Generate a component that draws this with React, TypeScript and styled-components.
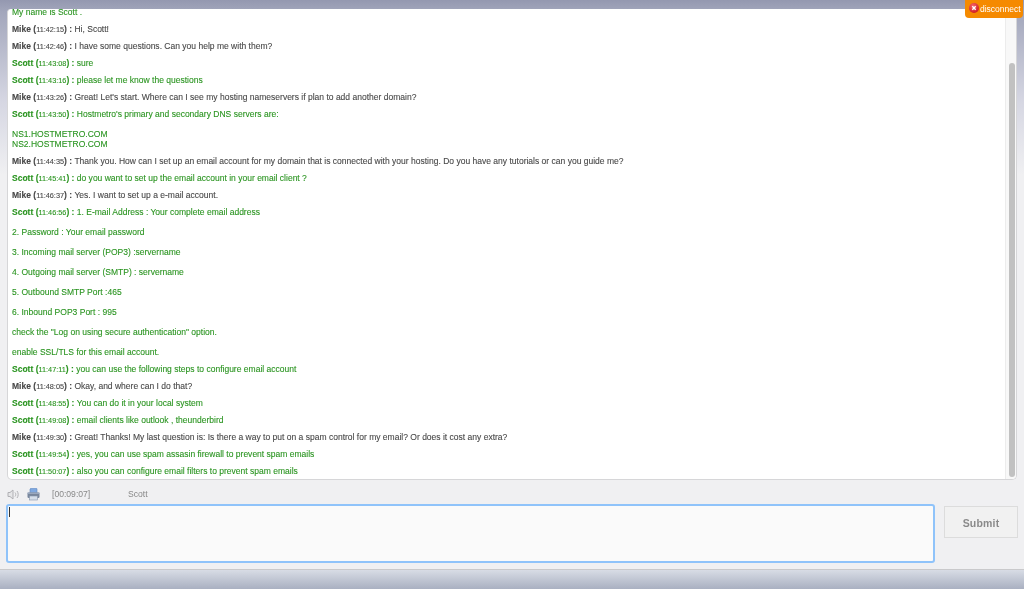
import React from "react";
import styled, { createGlobalStyle } from "styled-components";

const Global = createGlobalStyle`
  html, body { margin: 0; padding: 0; height: 100%; overflow: hidden; }
  body { background: #efeff1; font-family: "Liberation Sans", Arial, sans-serif; }
`;

const Page = styled.div`
  width: 1024px; height: 589px; overflow: hidden; position: relative;
  display: flex; flex-direction: column; padding-top: 9px; box-sizing: border-box;
  background: linear-gradient(#9498b0 0, #a3a7bc 12px, #d5d6e2 100px, #f0f0f2 175px);
  filter: blur(0.3px);
`;
const Main = styled.div`
  flex: none; height: 471px; display: flex; padding: 0 7px 0 7px;
`;
const Transcript = styled.div`
  position: relative; z-index: 1;
  flex: 1; height: 471px; overflow: hidden; box-sizing: border-box;
  background: #fff; border: 1px solid #d6d6d8; border-top: 0;
  border-radius: 4px 0 5px 5px;
  display: flex;
`;
const Log = styled.div`
  flex: 1; padding: 0 0 0 4px; margin-top: -2px;
`;
const Row = styled.div<{ $me?: boolean; $gap?: number }>`
  font-size: 8.53px; line-height: 10px; height: 10px;
  margin-bottom: ${p => p.$gap ?? 7}px;
  white-space: nowrap;
  -webkit-text-stroke: 0.1px;
  color: ${p => (p.$me ? "#2a9420" : "#484848")};
`;
const Name = styled.b`
  font-weight: bold;
`;
const Time = styled.span`
  font-size: 7.3px; font-weight: normal;
`;
const Track = styled.div`
  flex: none; width: 11px; background: #f8f8f8; border-left: 1px solid #ececec;
  padding: 54px 2px 2px 2px; box-sizing: border-box;
`;
const Thumb = styled.div`
  width: 6px; margin-left: 1px; height: 414px; border-radius: 3px; background: #c1c1c1;
`;
const Disconnect = styled.div`
  position: absolute; z-index: 2; top: 0; right: 1px; width: 58px; height: 18px;
  background: #f58a00; border-radius: 0 0 4px 4px; color: #fff; font-size: 8.5px;
  display: flex; align-items: center; gap: 1px; padding-left: 4px; box-sizing: border-box;
  svg { margin-top: -3px; flex: none; }
`;
const Status = styled.div`
  height: 24px; flex: none; display: flex; align-items: center; padding: 4px 0 0 7px;
  font-size: 8.6px; color: #888; box-sizing: border-box;
`;
const SoundWrap = styled.span`
  width: 13px; display: flex; margin-right: 7px;
`;
const PrintWrap = styled.span`
  width: 13px; display: flex; margin-right: 12px;
`;
const Clock = styled.span`
  width: 76px;
`;
const ComposeRow = styled.div`
  flex: none; display: flex; align-items: flex-start; padding: 0 6px 0 6px; gap: 9px;
`;
const Input = styled.div`
  width: 930px; height: 59px; box-sizing: border-box; position: relative;
  background: #fafafa; border: 2px solid #8fc3fa; border-radius: 3px;
`;
const Caret = styled.span`
  position: absolute; left: 1px; top: 1px; width: 1px; height: 10px; background: #333;
`;
const SubmitButton = styled.button`
  width: 74px; height: 32px; box-sizing: border-box; margin-top: 2px; padding-top: 2px;
  background: #f1f1f1; border: 1px solid #dcdcdc; color: #8a8a8a;
  font: bold 10.5px "Liberation Sans", Arial, sans-serif; letter-spacing: .2px;
`;
const Bottom = styled.div`
  margin-top: auto; height: 19px; flex: none; border-top: 1px solid #c9c9cb;
  background: linear-gradient(#d8dce5, #a9b0c1);
`;

type Msg = { who?: "Mike" | "Scott"; t?: string; text: string; gap?: number };
const msgs: Msg[] = [
  { text: "My name is Scott ." },
  { who: "Mike", t: "11:42:15", text: "Hi, Scott!" },
  { who: "Mike", t: "11:42:46", text: "I have some questions. Can you help me with them?" },
  { who: "Scott", t: "11:43:08", text: "sure" },
  { who: "Scott", t: "11:43:16", text: "please let me know the questions" },
  { who: "Mike", t: "11:43:26", text: "Great! Let's start. Where can I see my hosting nameservers if plan to add another domain?" },
  { who: "Scott", t: "11:43:50", text: "Hostmetro's primary and secondary DNS servers are:", gap: 10 },
  { text: "NS1.HOSTMETRO.COM", gap: 0 },
  { text: "NS2.HOSTMETRO.COM" },
  { who: "Mike", t: "11:44:35", text: "Thank you. How can I set up an email account for my domain that is connected with your hosting. Do you have any tutorials or can you guide me?" },
  { who: "Scott", t: "11:45:41", text: "do you want to set up the email account in your email client ?" },
  { who: "Mike", t: "11:46:37", text: "Yes. I want to set up a e-mail account." },
  { who: "Scott", t: "11:46:56", text: "1. E-mail Address : Your complete email address", gap: 10 },
  { text: "2. Password : Your email password", gap: 10 },
  { text: "3. Incoming mail server (POP3) :servername", gap: 10 },
  { text: "4. Outgoing mail server (SMTP) : servername", gap: 10 },
  { text: "5. Outbound SMTP Port :465", gap: 10 },
  { text: "6. Inbound POP3 Port : 995", gap: 10 },
  { text: 'check the "Log on using secure authentication" option.', gap: 10 },
  { text: "enable SSL/TLS for this email account." },
  { who: "Scott", t: "11:47:11", text: "you can use the following steps to configure email account" },
  { who: "Mike", t: "11:48:05", text: "Okay, and where can I do that?" },
  { who: "Scott", t: "11:48:55", text: "You can do it in your local system" },
  { who: "Scott", t: "11:49:08", text: "email clients like outlook , theunderbird" },
  { who: "Mike", t: "11:49:30", text: "Great! Thanks! My last question is: Is there a way to put on a spam control for my email? Or does it cost any extra?" },
  { who: "Scott", t: "11:49:54", text: "yes, you can use spam assasin firewall to prevent spam emails" },
  { who: "Scott", t: "11:50:07", text: "also you can configure email filters to prevent spam emails" },
];

export default function App() {
  return (
    <Page>
      <Global />
      <Main>
        <Transcript>
          <Log>
            {msgs.map((m, i) => (
              <Row key={i} $me={m.who ? m.who === "Scott" : true} $gap={m.gap}>
                {m.who ? (
                  <>
                    <Name>{m.who} (</Name><Time>{m.t}</Time><Name>) : </Name>
                  </>
                ) : null}
                {m.text}
              </Row>
            ))}
          </Log>
          <Track><Thumb /></Track>
        </Transcript>
      </Main>
      <Disconnect>
        <svg width="10" height="10" viewBox="0 0 10 10">
          <defs>
            <radialGradient id="dc" cx="0.4" cy="0.3" r="0.8">
              <stop offset="0" stopColor="#f7666b" />
              <stop offset="1" stopColor="#c9101c" />
            </radialGradient>
          </defs>
          <circle cx="5" cy="5" r="5" fill="url(#dc)" />
          <path d="M3.3 3.3l3.4 3.4M6.7 3.3l-3.4 3.4" stroke="#fff" strokeWidth="1.4" />
        </svg>
        disconnect
      </Disconnect>
      <Status>
        <SoundWrap>
          <svg width="12" height="11" viewBox="0 0 12 11" fill="none" stroke="#b0b0b4" strokeWidth="1">
            <path d="M1 3.5h2l3-2.5v9L3 7.5H1z" fill="#e6e6e8" />
            <path d="M8 3.5c1 1 1 3 0 4M10 2c1.6 2 1.6 5 0 7" />
          </svg>
        </SoundWrap>
        <PrintWrap>
          <svg width="13" height="13" viewBox="0 0 13 13">
            <path d="M3 5V1l1-.8h5.5L10 1v4z" fill="#7fa8e0" stroke="#5f86bc" strokeWidth="0.6" />
            <rect x="0.5" y="4.5" width="12" height="5.5" rx="1.2" fill="#78869c" />
            <rect x="0.5" y="4.5" width="12" height="1.5" fill="#9aa8be" />
            <rect x="2.5" y="8" width="8" height="4" fill="#d5deea" stroke="#8594aa" strokeWidth="0.6" />
          </svg>
        </PrintWrap>
        <Clock>[00:09:07]</Clock>
        <span>Scott</span>
      </Status>
      <ComposeRow>
        <Input><Caret /></Input>
        <SubmitButton>Submit</SubmitButton>
      </ComposeRow>
      <Bottom />
    </Page>
  );
}
